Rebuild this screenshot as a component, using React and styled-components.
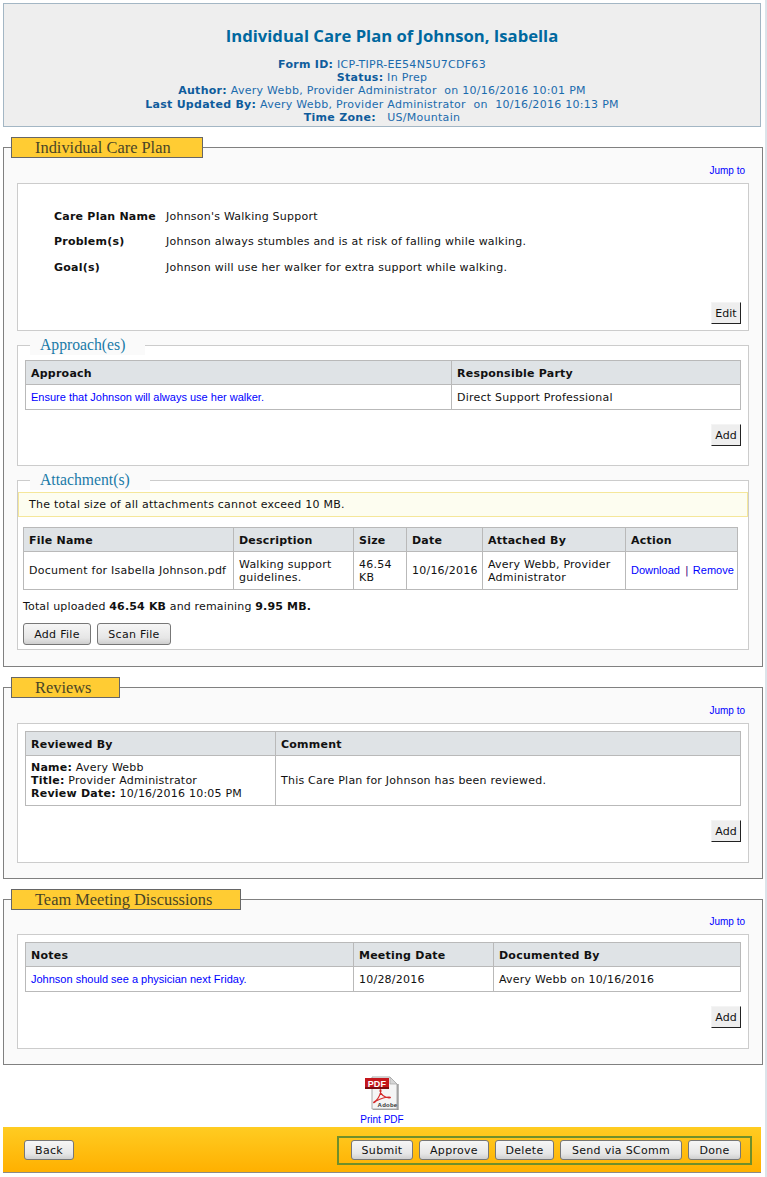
import React from "react";
import styled, { createGlobalStyle } from "styled-components";

const GlobalStyle = createGlobalStyle`
  html, body {
    margin: 0;
    padding: 0;
    background: #ffffff;
  }
  body {
    font-family: "DejaVu Sans", Verdana, sans-serif;
    font-size: 11px;
    letter-spacing: 0.23px;
    color: #111111;
  }
`;

const Page = styled.div`
  width: 767px;
  height: 1177px;
  padding: 3px 0 0 3px;
  box-sizing: border-box;
  overflow: hidden;
  border-right: 2px solid #dbe4ea;
`;

const Header = styled.header`
  width: 758px;
  height: 124px;
  box-sizing: border-box;
  border: 1px solid #a3b6c4;
  background: #eeeeee;
  text-align: center;
  color: #1a6bad;
  line-height: 13.2px;
  letter-spacing: 0.28px;
  padding-top: 20px;
`;

const Title = styled.h1`
  margin: 0 0 11px;
  padding-left: 20px;
  font-family: "Open Sans", sans-serif;
  font-size: 16.65px;
  line-height: 23px;
  font-weight: 700;
  letter-spacing: 0;
  color: #00689f;
`;

const MetaLine = styled.div`
  white-space: pre;
  b {
    color: #0f5c9c;
  }
`;

const Section = styled.fieldset`
  width: 760px;
  box-sizing: border-box;
  margin: ${(p) => p.$top}px 0 0;
  padding: 0 13px;
  border: 1px solid #808080;
  background: #fafafa;
  height: ${(p) => p.$height}px;
  min-width: 0;
`;

const SectionTab = styled.legend`
  box-sizing: border-box;
  width: ${(p) => p.$width}px;
  height: 21px;
  margin-left: -6px;
  padding: 0 0 0 23px;
  border: 1px solid #666666;
  background: #ffcc33;
  font-family: "Liberation Serif", serif;
  font-size: 16.4px;
  line-height: 19px;
  letter-spacing: 0;
  color: #4a4526;
`;

const JumpRow = styled.div`
  height: 25px;
  box-sizing: border-box;
  padding: 0 4px ${(p) => p.$lift || 0}px 0;
  display: flex;
  justify-content: flex-end;
  align-items: center;
`;

const SmallLink = styled.a`
  font-family: "Liberation Sans", Arial, sans-serif;
  font-size: 10px;
  letter-spacing: 0;
  color: #0000ff;
  cursor: pointer;
`;

const CellLink = styled(SmallLink)`
  font-size: 11px;
`;

const LinkBar = styled.span`
  margin: 0 4px 0 5px;
  color: #44007f;
`;

const PlanBox = styled.div`
  height: 148px;
  box-sizing: border-box;
  border: 1px solid #cccccc;
  background: #ffffff;
  padding: 20px 7px 0 36px;
`;

const PlanGrid = styled.div`
  display: grid;
  grid-template-columns: 112px 1fr;
  grid-template-rows: 25px 25px 26px;
  align-items: center;
  height: 98px;
  b {
    color: #111111;
  }
`;

const ButtonRow = styled.div`
  display: flex;
  justify-content: flex-end;
  margin-top: ${(p) => p.$top || 0}px;
`;

const FlatButton = styled.button`
  width: 30px;
  height: 22px;
  padding: 0;
  box-sizing: border-box;
  border: 1px solid #f4f4f4;
  border-right-color: #222222;
  border-bottom-color: #222222;
  background: #eeeeee;
  font-family: "DejaVu Sans", Verdana, sans-serif;
  font-size: 11px;
  color: #111111;
`;

const SubSet = styled.fieldset`
  margin: ${(p) => p.$top}px 0 0;
  padding: 0 ${(p) => p.$side ?? 7}px;
  border: 1px solid #cccccc;
  background: #ffffff;
  min-width: 0;
  height: ${(p) => p.$height}px;
  box-sizing: border-box;
`;

const SubLegend = styled.legend`
  box-sizing: border-box;
  width: ${(p) => p.$width}px;
  height: 20px;
  margin-left: ${(p) => p.$left ?? 5}px;
  padding: 0 0 0 10px;
  background: #fafafa;
  font-family: "Liberation Serif", serif;
  font-size: 15.7px;
  line-height: 20px;
  letter-spacing: 0;
  color: #1a7aa8;
`;

const Grid = styled.table`
  width: ${(p) => p.$width || 716}px;
  border-collapse: collapse;
  table-layout: fixed;
  margin-top: ${(p) => p.$top || 0}px;
  background: #ffffff;
`;

const Head = styled.th`
  height: 21px;
  padding: 2px 5px 0;
  border: 1px solid #b9b9b9;
  background: #dfe3e6;
  text-align: left;
  font-weight: 700;
  color: #111111;
`;

const Cell = styled.td`
  height: ${(p) => p.$height || 24}px;
  padding: 0 5px;
  border: 1px solid #b9b9b9;
  line-height: 13px;
  vertical-align: middle;
`;

const Notice = styled.div`
  height: 25px;
  box-sizing: border-box;
  margin: 2px -5px 0 -5px;
  padding-left: 10px;
  display: flex;
  align-items: center;
  border: 1px solid #f5e79a;
  background: #fdfdf0;
`;

const Total = styled.div`
  margin-top: 10px;
  line-height: 14px;
  letter-spacing: 0.16px;
`;

const FileButtons = styled.div`
  display: flex;
  gap: 6px;
  margin-top: 9px;
`;

const SoftButton = styled.button`
  height: ${(p) => p.$height || 22}px;
  width: ${(p) => p.$width}px;
  padding: 0;
  box-sizing: border-box;
  border: 1px solid #777777;
  border-radius: 3px;
  background: linear-gradient(#f6f6f6, #e6e6e6 70%, #cfcfcf);
  font-family: "DejaVu Sans", Verdana, sans-serif;
  font-size: 11px;
  letter-spacing: 0.3px;
  color: #111111;
`;

const ReviewLines = styled.div`
  line-height: 13px;
`;

const PdfBlock = styled.div`
  height: 62px;
  width: 758px;
  display: flex;
  flex-direction: column;
  align-items: center;
  padding-top: 11px;
  box-sizing: border-box;
  svg {
    display: block;
  }
`;

const PdfLabel = styled(SmallLink)`
  margin-top: 3px;
  line-height: 14px;
`;

const ActionBar = styled.footer`
  width: 758px;
  height: 46px;
  box-sizing: border-box;
  padding: 9px 9px 0 21px;
  display: flex;
  justify-content: space-between;
  align-items: flex-start;
  background: linear-gradient(#ffcc22, #ffb000);
  border-bottom: 1px solid #8a8a8a;
`;

const BackWrap = styled.div`
  padding-top: 4px;
`;

const ActionGroup = styled.div`
  display: flex;
  gap: 6px;
  box-sizing: border-box;
  height: 29px;
  padding: 2px 9px 0 12px;
  border: 2px solid #6f8f2a;
`;

function PdfIcon() {
  return (
    <svg width="34" height="34" viewBox="0 0 34 34">
      <path d="M7 1h18l7 7v25H7z" fill="#f5f5f5" stroke="#a8a8a8" strokeWidth="1" />
      <path d="M25 1l7 7h-7z" fill="#d6d6d6" stroke="#a8a8a8" strokeWidth="0.7" />
      <path d="M33 8v26H8" fill="none" stroke="#707070" strokeWidth="1" />
      <path
        d="M9 26c4-2 6-7 7-11 0-2-1-2-1 0 1 4 4 6 9 7 2 0 2-1 0-1-5 0-9 2-13 4-2 2-3 2-2 1z"
        fill="none"
        stroke="#d42a2a"
        strokeWidth="1.1"
      />
      <rect x="0" y="2" width="24" height="11" fill="#c4161c" />
      <rect x="0" y="11" width="24" height="2" fill="#7d0c10" />
      <text x="12" y="10.5" textAnchor="middle" fontFamily="Liberation Sans, sans-serif" fontSize="9" fontWeight="700" fill="#ffffff">PDF</text>
      <text x="22.5" y="31" textAnchor="middle" fontFamily="Liberation Sans, sans-serif" fontSize="6" fontWeight="700" fill="#333333">Adobe</text>
    </svg>
  );
}

export default function App() {
  return (
    <Page>
      <GlobalStyle />
      <Header>
        <Title>Individual Care Plan of Johnson, Isabella</Title>
        <MetaLine><b>Form ID:</b> ICP-TIPR-EE54N5U7CDF63</MetaLine>
        <MetaLine><b>Status:</b> In Prep</MetaLine>
        <MetaLine><b>Author:</b> Avery Webb, Provider Administrator  on 10/16/2016 10:01 PM</MetaLine>
        <MetaLine><b>Last Updated By:</b> Avery Webb, Provider Administrator  on  10/16/2016 10:13 PM</MetaLine>
        <MetaLine><b>Time Zone:</b>   US/Mountain</MetaLine>
      </Header>

      <Section $top={10} $height={530}>
        <SectionTab $width={192}>Individual Care Plan</SectionTab>
        <JumpRow><SmallLink>Jump to</SmallLink></JumpRow>
        <PlanBox>
          <PlanGrid>
            <b>Care Plan Name</b><span>Johnson's Walking Support</span>
            <b>Problem(s)</b><span>Johnson always stumbles and is at risk of falling while walking.</span>
            <b>Goal(s)</b><span>Johnson will use her walker for extra support while walking.</span>
          </PlanGrid>
          <ButtonRow><FlatButton>Edit</FlatButton></ButtonRow>
        </PlanBox>

        <SubSet $top={4} $height={131}>
          <SubLegend $width={115}>Approach(es)</SubLegend>
          <Grid $top={5}>
            <colgroup><col width="426" /><col /></colgroup>
            <thead>
              <tr><Head>Approach</Head><Head>Responsible Party</Head></tr>
            </thead>
            <tbody>
              <tr>
                <Cell><CellLink>Ensure that Johnson will always use her walker.</CellLink></Cell>
                <Cell>Direct Support Professional</Cell>
              </tr>
            </tbody>
          </Grid>
          <ButtonRow $top={14}><FlatButton>Add</FlatButton></ButtonRow>
        </SubSet>

        <SubSet $top={4} $height={180} $side={5}>
          <SubLegend $width={120} $left={7}>Attachment(s)</SubLegend>
          <Notice>The total size of all attachments cannot exceed 10 MB.</Notice>
          <Grid $top={10} $width={715}>
            <colgroup>
              <col width="210" /><col width="120" /><col width="53" /><col width="76" /><col width="143" /><col />
            </colgroup>
            <thead>
              <tr>
                <Head>File Name</Head><Head>Description</Head><Head>Size</Head>
                <Head>Date</Head><Head>Attached By</Head><Head>Action</Head>
              </tr>
            </thead>
            <tbody>
              <tr>
                <Cell $height={37}>Document for Isabella Johnson.pdf</Cell>
                <Cell $height={37}>Walking support guidelines.</Cell>
                <Cell $height={37}>46.54 KB</Cell>
                <Cell $height={37}>10/16/2016</Cell>
                <Cell $height={37}>Avery Webb, Provider Administrator</Cell>
                <Cell $height={37}><CellLink>Download</CellLink><LinkBar>|</LinkBar><CellLink>Remove</CellLink></Cell>
              </tr>
            </tbody>
          </Grid>
          <Total>Total uploaded <b>46.54 KB</b> and remaining <b>9.95 MB.</b></Total>
          <FileButtons>
            <SoftButton $width={68}>Add File</SoftButton>
            <SoftButton $width={74}>Scan File</SoftButton>
          </FileButtons>
        </SubSet>
      </Section>

      <Section $top={10} $height={202}>
        <SectionTab $width={109}>Reviews</SectionTab>
        <JumpRow><SmallLink>Jump to</SmallLink></JumpRow>
        <SubSet $top={0} $height={140}>
          <Grid $top={7}>
            <colgroup><col width="250" /><col /></colgroup>
            <thead>
              <tr><Head>Reviewed By</Head><Head>Comment</Head></tr>
            </thead>
            <tbody>
              <tr>
                <Cell $height={49}>
                  <ReviewLines>
                    <div><b>Name:</b> Avery Webb</div>
                    <div><b>Title:</b> Provider Administrator</div>
                    <div><b>Review Date:</b> 10/16/2016 10:05 PM</div>
                  </ReviewLines>
                </Cell>
                <Cell $height={49}>This Care Plan for Johnson has been reviewed.</Cell>
              </tr>
            </tbody>
          </Grid>
          <ButtonRow $top={14}><FlatButton>Add</FlatButton></ButtonRow>
        </SubSet>
      </Section>

      <Section $top={10} $height={176}>
        <SectionTab $width={230}>Team Meeting Discussions</SectionTab>
        <JumpRow $lift={2}><SmallLink>Jump to</SmallLink></JumpRow>
        <SubSet $top={-1} $height={115}>
          <Grid $top={7}>
            <colgroup><col width="328" /><col width="140" /><col /></colgroup>
            <thead>
              <tr><Head>Notes</Head><Head>Meeting Date</Head><Head>Documented By</Head></tr>
            </thead>
            <tbody>
              <tr>
                <Cell><CellLink>Johnson should see a physician next Friday.</CellLink></Cell>
                <Cell>10/28/2016</Cell>
                <Cell>Avery Webb on 10/16/2016</Cell>
              </tr>
            </tbody>
          </Grid>
          <ButtonRow $top={14}><FlatButton>Add</FlatButton></ButtonRow>
        </SubSet>
      </Section>

      <PdfBlock>
        <PdfIcon />
        <PdfLabel>Print PDF</PdfLabel>
      </PdfBlock>

      <ActionBar>
        <BackWrap><SoftButton $width={50} $height={20}>Back</SoftButton></BackWrap>
        <ActionGroup>
          <SoftButton $width={62} $height={20}>Submit</SoftButton>
          <SoftButton $width={70} $height={20}>Approve</SoftButton>
          <SoftButton $width={59} $height={20}>Delete</SoftButton>
          <SoftButton $width={122} $height={20}>Send via SComm</SoftButton>
          <SoftButton $width={53} $height={20}>Done</SoftButton>
        </ActionGroup>
      </ActionBar>
    </Page>
  );
}
